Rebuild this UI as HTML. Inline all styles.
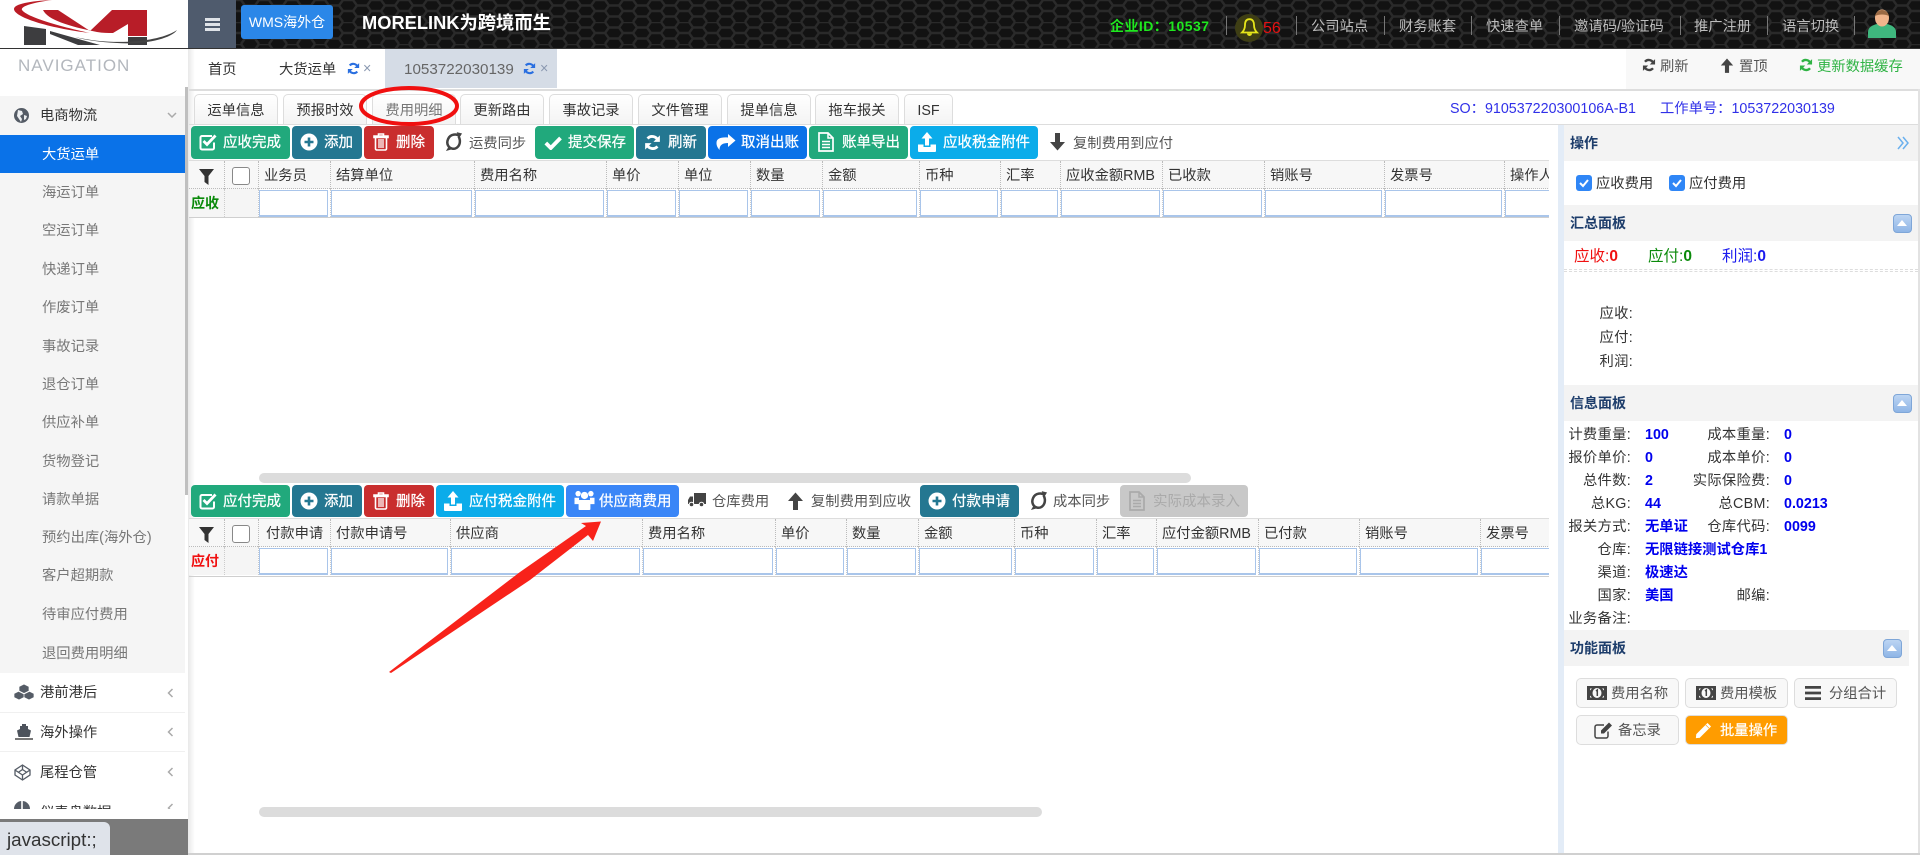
<!DOCTYPE html>
<html lang="zh"><head><meta charset="utf-8"><title>MORELINK</title>
<style>
*{box-sizing:border-box}
html,body{margin:0;padding:0;width:1920px;height:855px;overflow:hidden;background:#fff;font-family:"Liberation Sans","Noto Sans CJK SC",sans-serif;font-size:14.300px;color:#333}
.a,.t,.b,.st,.sb,.l,.v,.sm,.fb{position:absolute}
.t{white-space:nowrap;height:20px;line-height:22px}
svg{position:absolute;display:block;overflow:visible}
.sm{left:42px;width:120px;height:20px;line-height:22px;color:#777;white-space:nowrap}
.st{top:94px;height:31px;border:1px solid #ddd;border-bottom:0;border-radius:5px 5px 0 0;background:linear-gradient(#fff,#f3f3f3);text-align:center;line-height:32px;color:#333;white-space:nowrap}
.b{height:33px;border-radius:4px;color:#fff;line-height:35px;white-space:nowrap;-webkit-text-stroke:.25px #fff;font-size:14.500px}
.b span{position:absolute;top:0}
.g{background:#21a97c}.tl{background:#247791}.r{background:#c92e2e}.bl{background:#0a72e8}.lb{background:#0bacea}
.wrap{position:absolute;left:189px;width:1360px;overflow:hidden;border-top:1px solid #ddd;border-bottom:1px solid #cfcfcf}
table{border-collapse:separate;border-spacing:0;table-layout:fixed}
th{height:28px;background:#f7f7f7;font-weight:400;text-align:left;padding:0 0 0 5px;border-left:1px dotted #bbb;border-bottom:1px dotted #bbb;white-space:nowrap;overflow:hidden;color:#333}
td{height:28px;padding:0;border-left:1px dotted #ccc;background:#fff;white-space:nowrap;overflow:hidden}
td i{display:block;height:27px;margin:0 2px 0 0;border:1px solid #a9c5ea;border-bottom-width:2px}
.c0{background:#f5f5f5;border-left:0;font-weight:700;font-size:14px;padding-left:2px}
.c1{background:#f5f5f5}
th.c0,th.c1{background:#f7f7f7}
.cb{display:block;width:18px;height:18px;margin:2px 0 0 2px;border:1px solid #888;border-radius:3px;background:#fff}
.ph{position:absolute;background:#f3f3f3;height:36px;line-height:36px;color:#1d3d6b;font-weight:700;padding-left:6px;font-size:14px}
.cl{position:absolute;width:19px;height:19px;border:1px solid #7ea6d8;border-radius:4px;background:linear-gradient(#bcd5f3,#8fb5e6)}
.cl:after{content:"";position:absolute;left:3px;top:5px;border:5.5px solid transparent;border-top:0;border-bottom:6px solid #fff}
.l{width:90px;text-align:right;height:20px;line-height:22px;white-space:nowrap;color:#333;letter-spacing:.3px}
.v{height:20px;line-height:22px;white-space:nowrap;color:#0000ee;font-weight:700;font-size:14.300px}
.fb{width:103px;height:30px;border:1px solid #ddd;border-radius:5px;background:#f8f8f8;color:#555;line-height:30px;white-space:nowrap}
.fb span{position:absolute;top:0}
.sp{position:absolute;top:16px;width:1px;height:19px;background:#777}
.h{color:#bdbdbd;top:16px}
</style></head><body>

<svg width="0" height="0" style="position:absolute">
<defs>
<pattern id="hex" width="28" height="22" patternUnits="userSpaceOnUse"><rect width="28" height="22" fill="#121212"/><path d="M0 0l5 0 4 5.500 -4 5.500 -5 0M28 0l-5 0 -4 5.500 4 5.500 5 0M9 5.500h10M5 11l4 5.500 -4 5.500M23 11l-4 5.500 4 5.500M9 16.500h10M5 11h-5M23 11h5" fill="none" stroke="#2a2a2a" stroke-width="2.400"/></pattern>
<symbol id="chk" viewBox="0 0 18 18"><path d="M15 9.500V15a1.500 1.500 0 0 1-1.500 1.500H3A1.500 1.500 0 0 1 1.500 15V4.500A1.500 1.500 0 0 1 3 3h10" fill="none" stroke="currentColor" stroke-width="2"/><path d="M4.500 8l3.500 3.500L16.500 2.500" fill="none" stroke="currentColor" stroke-width="2.800"/></symbol>
<symbol id="plus" viewBox="0 0 18 18"><circle cx="9" cy="9" r="8.500" fill="currentColor"/><path d="M9 4.500v9M4.500 9h9" stroke="#247791" stroke-width="2.600"/></symbol>
<symbol id="trash" viewBox="0 0 16 18"><path d="M5.500 2.500V1h5v1.500M1 3h14v1.500H1zM2.500 5v11a1.500 1.500 0 0 0 1.500 1h8a1.500 1.500 0 0 0 1.500-1V5" fill="none" stroke="currentColor" stroke-width="1.600"/><path d="M6 6v9M10 6v9M8 6v9" stroke="currentColor" stroke-width="1.300"/></symbol>
<symbol id="sync" viewBox="0 0 20 22"><path d="M17 4.500C13 1.500 6 2 3.500 7.500 1 13 4 18 8.500 18.500c5 .5 8.500-4 8-9.500-.2-2-1-3.500-1.500-4.500" fill="none" stroke="currentColor" stroke-width="2.800"/><path d="M13 0l6 1.500-3.500 5zM1 21l3.500-5.500 3.500 3.500z" fill="currentColor"/></symbol>
<symbol id="ok" viewBox="0 0 18 14"><path d="M1.800 7l5 5L16.500 2" fill="none" stroke="currentColor" stroke-width="3.800"/></symbol>
<symbol id="ref" viewBox="0 0 18 18"><path d="M15 7.500A6.500 6.500 0 0 0 3.800 4.800M3 10.500a6.500 6.500 0 0 0 11.200 2.700" fill="none" stroke="currentColor" stroke-width="3"/><path d="M16.800 1.500v6.800H10zM1.200 16.500V9.700H8z" fill="currentColor"/></symbol>
<symbol id="share" viewBox="0 0 20 18"><path d="M12 1l7.500 6.500L12 14v-4C7 10 3.500 11.500 3.500 17 1 14 .5 12 .5 10c0-4.500 4-6 11.500-5.500z" fill="currentColor"/></symbol>
<symbol id="file" viewBox="0 0 16 20"><path d="M1 1h9l5 5v13H1z" fill="none" stroke="currentColor" stroke-width="1.700"/><path d="M10 1v5h5M4 9.500h8M4 12.500h8M4 15.500h8" fill="none" stroke="currentColor" stroke-width="1.500"/></symbol>
<symbol id="up" viewBox="0 0 18 20"><path d="M9 0l5.500 6.500H11v7H7v-7H3.500z" fill="currentColor"/><path d="M0 12.500h5.500v2.500h7v-2.500H18V19a1 1 0 0 1-1 1H1a1 1 0 0 1-1-1z" fill="currentColor"/></symbol>
<symbol id="adown" viewBox="0 0 17 18"><path d="M6 0h5v9h5l-7.500 8.500L1 9h5z" fill="currentColor"/></symbol>
<symbol id="aup" viewBox="0 0 17 18"><path d="M6 18h5V9h5L8.500.500 1 9h5z" fill="currentColor"/></symbol>
<symbol id="users" viewBox="0 0 22 22"><circle cx="4" cy="4" r="3" fill="currentColor"/><circle cx="18" cy="4" r="3" fill="currentColor"/><circle cx="11" cy="6" r="4" fill="currentColor"/><path d="M0 8.500h5v7H0zM17 8.500h5v7h-5zM5.500 11h11a1 1 0 0 1 1 1v9a1 1 0 0 1-1 1h-11a1 1 0 0 1-1-1v-9a1 1 0 0 1 1-1z" fill="currentColor"/></symbol>
<symbol id="truck" viewBox="0 0 18 14"><path d="M6 0h12v11H6zM0 7l2-3.500h3V11H0z" fill="currentColor"/><circle cx="3.500" cy="11.500" r="2.300" fill="currentColor" stroke="#fff"/><circle cx="13.500" cy="11.500" r="2.300" fill="currentColor" stroke="#fff"/></symbol>
<symbol id="money" viewBox="0 0 20 14"><path d="M0 0h20v14H0z" fill="currentColor"/><ellipse cx="10" cy="7" rx="4.500" ry="5" fill="#f8f8f8"/><path d="M3 2.500h2L3 4.500zM17 2.500h-2l2 2zM3 11.500h2L3 9.500zM17 11.500h-2l2-2z" fill="#f8f8f8"/><path d="M9 5l1.300-1v6" fill="none" stroke="currentColor" stroke-width="1.500"/></symbol>
<symbol id="bars" viewBox="0 0 16 14"><path d="M0 0h16v2.800H0zM0 5.600h16v2.800H0zM0 11.200h16V14H0z" fill="currentColor"/></symbol>
<symbol id="edit" viewBox="0 0 19 17"><path d="M14 9.500V14a2 2 0 0 1-2 2H3a2 2 0 0 1-2-2V5a2 2 0 0 1 2-2h7" fill="none" stroke="currentColor" stroke-width="1.500"/><path d="M15 .5l3 3-8 8H7v-3z" fill="currentColor"/></symbol>
<symbol id="pen" viewBox="0 0 17 17"><path d="M12.500.5l4 4L5 16l-4.500.5L1 12zM10.800 3l3.200 3.200" fill="currentColor" stroke="#ff9c00" stroke-width=".6"/></symbol>
<symbol id="funnel" viewBox="0 0 15 16"><path d="M0 0h15L9.500 7v9l-4-3V7z" fill="currentColor"/></symbol>
</defs></svg>

<!-- HEADER -->
<div class="a" style="left:0;top:0;width:188px;height:48px;background:#fff;overflow:hidden">
<svg width="188" height="48" viewBox="0 0 188 48"><path d="M24 26l22 3v16H24z" fill="#3d3d3f"/><path d="M50 31l32 9 18 5H78L50 34z" fill="#3d3d3f"/><path d="M128 37h19v8h-19z" fill="#3d3d3f"/><path d="M75 37c38 9 85 5 102-7-6 9-34 15-60 13-18-1-32-3-42-6z" fill="#444"/><path d="M43 10h15l32 21 22-21h35v26h-19V24l-15 9c-5 0-10 0-16-1C68 26 48 20 43 10z" fill="#b81d28"/><path d="M52 0C30 1 14 4 14 9c0 8 34 19 76 24C58 26 27 17 22 10c-2-4 14-8 30-10z" fill="#bb1c26"/></svg></div>
<div class="a" style="left:188px;top:0;width:48px;height:48px;background:#4f5b6d"><svg style="left:17px;top:18px" width="15" height="13"><path d="M0 0h15v3H0zM0 5h15v3H0zM0 10h15v3H0z" fill="#dfe3e8"/></svg></div>
<svg style="left:236px;top:0" width="1684" height="48"><rect width="1684" height="48" fill="url(#hex)"/></svg>
<div class="a" style="left:0;top:48px;width:1920px;height:1px;background:#333"></div>
<div class="a" style="left:241px;top:5px;width:92px;height:34px;background:#2b87e8;border-radius:3px;color:#fff;text-align:center;line-height:34px;font-size:14px">WMS海外仓</div>
<div class="t" style="left:362px;top:12px;color:#fff;font-weight:700;font-size:18.300px">MORELINK为跨境而生</div>
<div class="t" style="left:1110px;top:15px;color:#1fe81f;font-weight:700;font-size:14px;letter-spacing:.45px">企业ID：10537</div>
<div class="sp" style="left:1226px"></div>
<div class="a" style="left:1235px;top:14px;width:28px;height:28px;border-radius:50%;background:#3e3e14"></div>
<svg style="left:1241px;top:18px" width="17" height="19" viewBox="0 0 17 19"><path d="M8.500 1.200C5 1.200 4 4 4 7c0 4-1.500 6-3 7.500h15C14.500 13 13 11 13 7c0-3-1-5.800-4.500-5.800z" fill="none" stroke="#e6e61a" stroke-width="1.800"/><path d="M6 15.500a2.500 2.500 0 0 0 5 0z" fill="#e6e61a"/></svg>
<div class="t" style="left:1263px;top:18px;color:#e81010;font-size:16px">56</div>
<div class="sp" style="left:1296px"></div><div class="sp" style="left:1384px"></div><div class="sp" style="left:1471px"></div><div class="sp" style="left:1559px"></div><div class="sp" style="left:1680px"></div><div class="sp" style="left:1767px"></div><div class="sp" style="left:1854px"></div>
<div class="t h" style="left:1311px">公司站点</div><div class="t h" style="left:1399px">财务账套</div><div class="t h" style="left:1486px">快速查单</div><div class="t h" style="left:1574px">邀请码/验证码</div><div class="t h" style="left:1694px">推广注册</div><div class="t h" style="left:1782px">语言切换</div>
<svg style="left:1868px;top:10px" width="28" height="28" viewBox="0 0 28 28"><path d="M0 28v-6c0-5 5-7 9-8h10c4 1 9 3 9 8v6z" fill="#3fb77e"/><ellipse cx="14" cy="8" rx="7" ry="8.500" fill="#f0b58c"/><path d="M7 6c1-4 4-6 7-6s6 2 7 6c-4-2-10-2-14 0z" fill="#9a6a44"/></svg>

<!-- SIDEBAR -->
<div class="a" style="left:188px;top:49px;width:7px;height:804px;background:linear-gradient(90deg,#e8e8e8,#fff)"></div>
<div class="t" style="left:18px;top:55px;height:22px;line-height:22px;font-size:17px;letter-spacing:1px;color:#b3b7bd">NAVIGATION</div>
<div class="a" style="left:0;top:96px;width:185px;height:577px;background:#f5f5f5"></div>
<div class="a" style="left:185px;top:87px;width:3px;height:408px;background:#bfbfbf"></div>
<svg style="left:14px;top:108px" width="15" height="15" viewBox="0 0 15 15"><circle cx="7.500" cy="7.500" r="7.500" fill="#555c66"/><path d="M4 2l4 1 1 3-3 2 2 3-1 3-2-3-2-3zM10 7l3 1-1 3-2 1z" fill="#eef0f2"/></svg>
<div class="t" style="left:40px;top:105px;color:#333">电商物流</div>
<svg style="left:167px;top:112px" width="10" height="7"><path d="M1 1l4 4 4-4" fill="none" stroke="#aaa" stroke-width="1.500"/></svg>
<div class="a" style="left:0;top:135px;width:185px;height:38px;background:#0a72e8"></div>
<div class="sm" style="top:144px;color:#fff">大货运单</div>
<div class="sm" style="top:182px">海运订单</div><div class="sm" style="top:220px">空运订单</div><div class="sm" style="top:259px">快递订单</div><div class="sm" style="top:297px">作废订单</div><div class="sm" style="top:336px">事故记录</div><div class="sm" style="top:374px">退仓订单</div><div class="sm" style="top:412px">供应补单</div><div class="sm" style="top:451px">货物登记</div><div class="sm" style="top:489px">请款单据</div><div class="sm" style="top:527px">预约出库(海外仓)</div><div class="sm" style="top:565px">客户超期款</div><div class="sm" style="top:604px">待审应付费用</div><div class="sm" style="top:643px">退回费用明细</div>
<div class="a" style="left:0;top:712px;width:185px;height:1px;background:#f0f0f0"></div>
<div class="a" style="left:0;top:751px;width:185px;height:1px;background:#f0f0f0"></div>
<svg style="left:14px;top:684px" width="20" height="16" viewBox="0 0 20 16"><path d="M10 0l5 2.500v5L10 10 5 7.500v-5zM5 7l5 2.500v4L5 16 0 13.500v-4zM15 7l5 2.500v4L15 16l-5-2.500v-4z" fill="#555c66" stroke="#fff" stroke-width=".7"/></svg>
<div class="t" style="left:40px;top:682px">港前港后</div>
<svg style="left:167px;top:688px" width="7" height="10"><path d="M5.500 1l-4 4 4 4" fill="none" stroke="#aaa" stroke-width="1.500"/></svg>
<svg style="left:15px;top:724px" width="18" height="16" viewBox="0 0 18 16"><path d="M7 0h4v2h2v3l3 1.500-1.500 6.500h-11L2 6.500 5 5V2h2z" fill="#4d535c"/><path d="M0 14h18v2H0z" fill="#777"/></svg>
<div class="t" style="left:40px;top:722px">海外操作</div>
<svg style="left:167px;top:727px" width="7" height="10"><path d="M5.500 1l-4 4 4 4" fill="none" stroke="#aaa" stroke-width="1.500"/></svg>
<svg style="left:14px;top:764px" width="17" height="17" viewBox="0 0 17 17"><path d="M8.500 1L16 6v5l-7.500 5L1 11V6zM1 6l7.500 5L16 6M8.500 1v4.500L4 8.500M8.500 16v-5M8.500 5.500L13 8.500" fill="none" stroke="#555c66" stroke-width="1.300"/></svg>
<div class="t" style="left:40px;top:762px">尾程仓管</div>
<svg style="left:167px;top:767px" width="7" height="10"><path d="M5.500 1l-4 4 4 4" fill="none" stroke="#aaa" stroke-width="1.500"/></svg>
<div class="a" style="left:0;top:795px;width:188px;height:14px;overflow:hidden">
<svg style="left:14px;top:6px" width="16" height="16" viewBox="0 0 16 16"><path d="M7.200 0v8H0A8 8 0 0 1 7.200 0zM8.800 0A8 8 0 0 1 16 8H8.800z" fill="#555c66"/></svg>
<div class="t" style="left:40px;top:7px">仪表盘数据</div>
<svg style="left:167px;top:8px" width="7" height="10"><path d="M5.500 1l-4 4 4 4" fill="none" stroke="#aaa" stroke-width="1.500"/></svg>
</div>
<div class="a" style="left:0;top:819px;width:188px;height:36px;background:#7a7a7a"></div>
<div class="a" style="left:0;top:822px;width:110px;height:33px;background:#dfe3ea;border-radius:0 6px 0 0"></div>
<div class="t" style="left:7px;top:829px;height:22px;line-height:22px;font-size:18.800px;color:#333">javascript:;</div>

<!-- TABS -->
<div class="t" style="left:208px;top:59px">首页</div>
<div class="t" style="left:279px;top:59px">大货运单</div>
<svg style="left:347px;top:62px;color:#2a6fe0" width="13" height="13"><use href="#ref"/></svg>
<div class="t" style="left:363px;top:58px;color:#8a98b0">×</div>
<div class="a" style="left:385px;top:49px;width:172px;height:39px;background:#d5dce6"></div>
<div class="t" style="left:404px;top:59px;color:#666;font-size:15.200px">1053722030139</div>
<svg style="left:523px;top:62px;color:#2a6fe0" width="13" height="13"><use href="#ref"/></svg>
<div class="t" style="left:540px;top:58px;color:#8a98b0">×</div>
<div class="a" style="left:1626px;top:49px;width:294px;height:40px;background:#f8f8f8"></div>
<svg style="left:1642px;top:58px;color:#444" width="14" height="14"><use href="#ref"/></svg><div class="t" style="left:1660px;top:56px;color:#555">刷新</div>
<svg style="left:1720px;top:58px;color:#444" width="14" height="15"><use href="#aup"/></svg><div class="t" style="left:1739px;top:56px;color:#555">置顶</div>
<svg style="left:1799px;top:58px;color:#2fb344" width="14" height="14"><use href="#ref"/></svg><div class="t" style="left:1817px;top:56px;color:#2fb344">更新数据缓存</div>
<div class="a" style="left:189px;top:89px;width:1731px;height:2px;background:#ddd"></div>
<div class="a" style="left:1918px;top:89px;width:2px;height:766px;background:#e2e2e2"></div>

<div class="st" style="left:194px;width:84px">运单信息</div><div class="st" style="left:283px;width:84px">预报时效</div><div class="st" style="left:372px;width:84px;color:#777">费用明细</div><div class="st" style="left:460px;width:84px">更新路由</div><div class="st" style="left:549px;width:84px">事故记录</div><div class="st" style="left:638px;width:84px">文件管理</div><div class="st" style="left:727px;width:84px">提单信息</div><div class="st" style="left:815px;width:84px">拖车报关</div><div class="st" style="left:904px;width:49px">ISF</div>
<div class="a" style="left:189px;top:124px;width:1729px;height:1px;background:#ddd"></div>
<div class="t" style="left:1450px;top:98px;color:#3030e8;font-size:14.300px">SO：910537220300106A-B1</div>
<div class="t" style="left:1660px;top:98px;color:#3030e8;font-size:14.300px">工作单号：1053722030139</div>
<svg style="left:359px;top:86px" width="100" height="40"><ellipse cx="50" cy="20" rx="48" ry="18" fill="none" stroke="#f01010" stroke-width="4"/></svg>

<!-- TOOLBAR 1 -->
<div class="b g" style="left:191px;top:126px;width:99px"><svg style="left:8px;top:7px;color:#fff" width="18" height="18"><use href="#chk"/></svg><span style="left:32px">应收完成</span></div>
<div class="b tl" style="left:292px;top:126px;width:70px"><svg style="left:8px;top:7px;color:#fff" width="18" height="18"><use href="#plus"/></svg><span style="left:32px">添加</span></div>
<div class="b r" style="left:364px;top:126px;width:70px"><svg style="left:9px;top:7px;color:#fff" width="16" height="18"><use href="#trash"/></svg><span style="left:32px">删除</span></div>
<svg style="left:445px;top:132px;color:#444" width="18" height="20"><use href="#sync"/></svg><div class="t" style="left:469px;top:133px;color:#555">运费同步</div>
<div class="b g" style="left:535px;top:126px;width:99px"><svg style="left:9px;top:10px;color:#fff" width="18" height="14"><use href="#ok"/></svg><span style="left:33px">提交保存</span></div>
<div class="b tl" style="left:636px;top:126px;width:70px"><svg style="left:8px;top:8px;color:#fff" width="17" height="17"><use href="#ref"/></svg><span style="left:32px">刷新</span></div>
<div class="b bl" style="left:708px;top:126px;width:99px"><svg style="left:8px;top:7px;color:#fff" width="20" height="18"><use href="#share"/></svg><span style="left:33px">取消出账</span></div>
<div class="b g" style="left:809px;top:126px;width:99px"><svg style="left:9px;top:6px;color:#fff" width="16" height="20"><use href="#file"/></svg><span style="left:33px">账单导出</span></div>
<div class="b lb" style="left:910px;top:126px;width:128px"><svg style="left:8px;top:6px;color:#fff" width="18" height="20"><use href="#up"/></svg><span style="left:33px">应收税金附件</span></div>
<svg style="left:1049px;top:133px;color:#444" width="17" height="18"><use href="#adown"/></svg><div class="t" style="left:1073px;top:133px;color:#555">复制费用到应付</div>

<!-- TABLE 1 -->
<div class="wrap" style="top:160px;height:58px"><table style="width:1435px"><colgroup><col style="width:35px"><col style="width:34px"><col style="width:72px"><col style="width:144px"><col style="width:132px"><col style="width:72px"><col style="width:72px"><col style="width:72px"><col style="width:97px"><col style="width:81px"><col style="width:60px"><col style="width:102px"><col style="width:102px"><col style="width:120px"><col style="width:120px"><col style="width:120px"></colgroup>
<tr><th class="c0"></th><th class="c1" style="padding-left:5px"><span class="cb"></span></th><th>业务员</th><th>结算单位</th><th>费用名称</th><th>单价</th><th>单位</th><th>数量</th><th>金额</th><th>币种</th><th>汇率</th><th>应收金额RMB</th><th>已收款</th><th>销账号</th><th>发票号</th><th>操作人</th></tr>
<tr><td class="c0" style="color:#0a8a0a">应收</td><td class="c1"></td><td><i></i></td><td><i></i></td><td><i></i></td><td><i></i></td><td><i></i></td><td><i></i></td><td><i></i></td><td><i></i></td><td><i></i></td><td><i></i></td><td><i></i></td><td><i></i></td><td><i></i></td><td><i></i></td></tr></table></div>
<svg style="left:199px;top:169px;color:#333" width="15" height="16"><use href="#funnel"/></svg>
<div class="a" style="left:259px;top:473px;width:932px;height:10px;border-radius:5px;background:#dcdcdc"></div>

<!-- TOOLBAR 2 -->
<div class="b g" style="left:191px;top:485px;width:99px;height:32px"><svg style="left:8px;top:7px;color:#fff" width="18" height="18"><use href="#chk"/></svg><span style="left:32px">应付完成</span></div>
<div class="b tl" style="left:292px;top:485px;width:70px;height:32px"><svg style="left:8px;top:7px;color:#fff" width="18" height="18"><use href="#plus"/></svg><span style="left:32px">添加</span></div>
<div class="b r" style="left:364px;top:485px;width:70px;height:32px"><svg style="left:9px;top:7px;color:#fff" width="16" height="18"><use href="#trash"/></svg><span style="left:32px">删除</span></div>
<div class="b lb" style="left:436px;top:485px;width:128px;height:32px"><svg style="left:8px;top:6px;color:#fff" width="18" height="20"><use href="#up"/></svg><span style="left:33px">应付税金附件</span></div>
<div class="b" style="left:566px;top:485px;width:113px;height:32px;background:#3a86f7"><svg style="left:8px;top:5px;color:#fff" width="21" height="20"><use href="#users"/></svg><span style="left:33px">供应商费用</span></div>
<svg style="left:688px;top:493px;color:#444" width="18" height="14"><use href="#truck"/></svg><div class="t" style="left:712px;top:491px;color:#555">仓库费用</div>
<svg style="left:787px;top:492px;color:#444" width="17" height="18"><use href="#aup"/></svg><div class="t" style="left:811px;top:491px;color:#555">复制费用到应收</div>
<div class="b tl" style="left:920px;top:485px;width:99px;height:32px"><svg style="left:8px;top:7px;color:#fff" width="18" height="18"><use href="#plus"/></svg><span style="left:32px">付款申请</span></div>
<svg style="left:1030px;top:491px;color:#444" width="18" height="20"><use href="#sync"/></svg><div class="t" style="left:1053px;top:491px;color:#555">成本同步</div>
<div class="b" style="left:1120px;top:485px;width:128px;height:32px;background:#c8c8c8;color:#aaa;-webkit-text-stroke:0"><svg style="left:9px;top:6px;color:#aaa" width="16" height="20"><use href="#file"/></svg><span style="left:33px">实际成本录入</span></div>

<!-- TABLE 2 -->
<div class="wrap" style="top:518px;height:59px"><table style="width:1411px"><colgroup><col style="width:35px"><col style="width:34px"><col style="width:72px"><col style="width:120px"><col style="width:192px"><col style="width:133px"><col style="width:71px"><col style="width:72px"><col style="width:96px"><col style="width:82px"><col style="width:60px"><col style="width:102px"><col style="width:101px"><col style="width:121px"><col style="width:120px"></colgroup>
<tr><th class="c0"></th><th class="c1" style="padding-left:5px"><span class="cb"></span></th><th style="padding-left:7px">付款申请</th><th>付款申请号</th><th>供应商</th><th>费用名称</th><th>单价</th><th>数量</th><th>金额</th><th>币种</th><th>汇率</th><th>应付金额RMB</th><th>已付款</th><th>销账号</th><th>发票号</th></tr>
<tr><td class="c0" style="color:#f01010">应付</td><td class="c1"></td><td><i></i></td><td><i></i></td><td><i></i></td><td><i></i></td><td><i></i></td><td><i></i></td><td><i></i></td><td><i></i></td><td><i></i></td><td><i></i></td><td><i></i></td><td><i></i></td><td><i></i></td></tr></table></div>
<svg style="left:199px;top:527px;color:#333" width="15" height="16"><use href="#funnel"/></svg>
<div class="a" style="left:259px;top:807px;width:783px;height:10px;border-radius:5px;background:#dcdcdc"></div>

<!-- ARROW -->
<svg style="left:0;top:0" width="1920" height="855"><polygon points="389,672 520,572 586,526 581,523 601,521.500 593,541 588,535 530,580 391,673" fill="#f8221a"/></svg>

<!-- RIGHT PANEL -->
<div class="a" style="left:1558px;top:125px;width:6px;height:728px;background:#e3ecf7"></div>
<div class="ph" style="left:1564px;top:125px;width:354px">操作</div>
<svg style="left:1897px;top:136px" width="12" height="14"><path d="M1 1l5 6-5 6M6 1l5 6-5 6" fill="none" stroke="#6ab0ee" stroke-width="1.500"/></svg>
<div class="a" style="left:1576px;top:175px;width:16px;height:16px;border-radius:3px;background:#2f86f6"><svg style="left:3px;top:3px" width="10" height="10"><path d="M1 5l3 3 5-6" fill="none" stroke="#fff" stroke-width="2"/></svg></div><div class="t" style="left:1596px;top:173px">应收费用</div>
<div class="a" style="left:1669px;top:175px;width:16px;height:16px;border-radius:3px;background:#2f86f6"><svg style="left:3px;top:3px" width="10" height="10"><path d="M1 5l3 3 5-6" fill="none" stroke="#fff" stroke-width="2"/></svg></div><div class="t" style="left:1689px;top:173px">应付费用</div>
<div class="ph" style="left:1564px;top:205px;width:354px">汇总面板</div><div class="cl" style="left:1893px;top:214px"></div>
<div class="t" style="left:1574px;top:246px;font-size:15.500px;color:#f01010">应收:<b>0</b></div>
<div class="t" style="left:1648px;top:246px;font-size:15.500px;color:#0a8a0a">应付:<b>0</b></div>
<div class="t" style="left:1722px;top:246px;font-size:15.500px;color:#1a1aee">利润:<b>0</b></div>
<div class="a" style="left:1564px;top:269px;width:354px;height:3px;border-top:1px dashed #ddd;border-bottom:1px dashed #ddd"></div>
<div class="l" style="left:1543px;top:303px">应收:</div><div class="l" style="left:1543px;top:327px">应付:</div><div class="l" style="left:1543px;top:351px">利润:</div>
<div class="ph" style="left:1564px;top:385px;width:354px">信息面板</div><div class="cl" style="left:1893px;top:394px"></div>
<div class="l" style="left:1541px;top:424px">计费重量:</div><div class="v" style="left:1645px;top:424px">100</div><div class="l" style="left:1680px;top:424px">成本重量:</div><div class="v" style="left:1784px;top:424px">0</div>
<div class="l" style="left:1541px;top:447px">报价单价:</div><div class="v" style="left:1645px;top:447px">0</div><div class="l" style="left:1680px;top:447px">成本单价:</div><div class="v" style="left:1784px;top:447px">0</div>
<div class="l" style="left:1541px;top:470px">总件数:</div><div class="v" style="left:1645px;top:470px">2</div><div class="l" style="left:1680px;top:470px">实际保险费:</div><div class="v" style="left:1784px;top:470px">0</div>
<div class="l" style="left:1541px;top:493px">总KG:</div><div class="v" style="left:1645px;top:493px">44</div><div class="l" style="left:1680px;top:493px">总CBM:</div><div class="v" style="left:1784px;top:493px">0.0213</div>
<div class="l" style="left:1541px;top:516px">报关方式:</div><div class="v" style="left:1645px;top:516px">无单证</div><div class="l" style="left:1680px;top:516px">仓库代码:</div><div class="v" style="left:1784px;top:516px">0099</div>
<div class="l" style="left:1541px;top:539px">仓库:</div><div class="v" style="left:1645px;top:539px">无限链接测试仓库1</div>
<div class="l" style="left:1541px;top:562px">渠道:</div><div class="v" style="left:1645px;top:562px">极速达</div>
<div class="l" style="left:1541px;top:585px">国家:</div><div class="v" style="left:1645px;top:585px">美国</div><div class="l" style="left:1680px;top:585px">邮编:</div>
<div class="l" style="left:1541px;top:608px">业务备注:</div>
<div class="ph" style="left:1564px;top:630px;width:345px">功能面板</div><div class="cl" style="left:1883px;top:639px"></div>
<div class="fb" style="left:1576px;top:678px"><svg style="left:10px;top:7px;color:#444" width="20" height="14"><use href="#money"/></svg><span style="left:34px">费用名称</span></div>
<div class="fb" style="left:1685px;top:678px"><svg style="left:10px;top:7px;color:#444" width="20" height="14"><use href="#money"/></svg><span style="left:34px">费用模板</span></div>
<div class="fb" style="left:1794px;top:678px"><svg style="left:10px;top:7px;color:#444" width="16" height="14"><use href="#bars"/></svg><span style="left:34px">分组合计</span></div>
<div class="fb" style="left:1576px;top:715px"><svg style="left:17px;top:6px;color:#444" width="19" height="17"><use href="#edit"/></svg><span style="left:41px">备忘录</span></div>
<div class="fb" style="left:1685px;top:715px;background:#ff9c00;color:#fff;-webkit-text-stroke:.2px #fff"><svg style="left:9px;top:6px;color:#fff" width="17" height="17"><use href="#pen"/></svg><span style="left:34px">批量操作</span></div>
<div class="a" style="left:0;top:853px;width:1920px;height:2px;background:#d0d0d0"></div>
<div class="a" style="left:0;top:853px;width:110px;height:2px;background:#dfe3ea"></div>
<div class="a" style="left:110px;top:853px;width:78px;height:2px;background:#7a7a7a"></div>
</body></html>
